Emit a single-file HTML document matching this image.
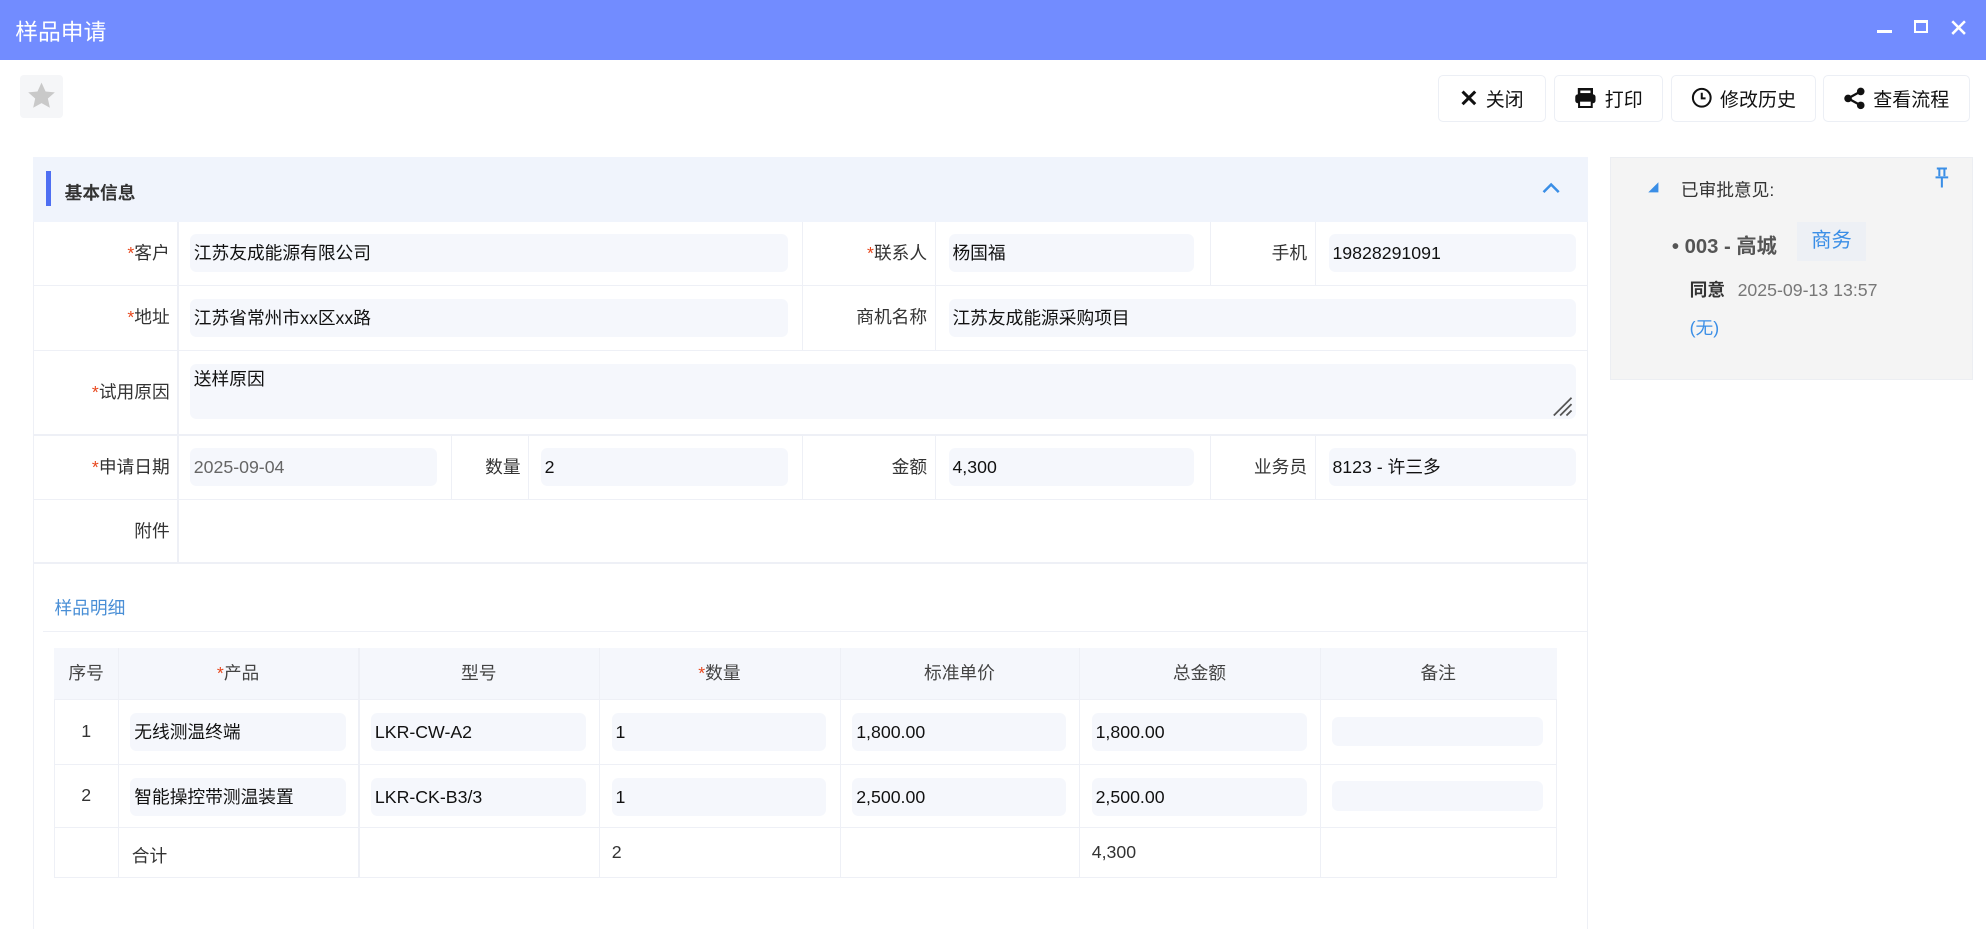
<!DOCTYPE html>
<html><head><meta charset="utf-8"><style>
html,body{margin:0;padding:0;overflow:hidden;background:#fff}
body{width:1986px;height:929px}
#r{zoom:1.26658;width:1568px;height:733px;position:relative;font-family:"Liberation Sans","Noto Sans CJK SC",sans-serif;font-size:14px;color:#222}
.a{position:absolute}
.tb{left:0;top:0;width:1568px;height:47px;background:#728cff;color:#fff}
.btn{top:59px;height:37px;border:1px solid #eceff5;border-radius:4px;box-sizing:border-box;display:flex;align-items:center;justify-content:center;gap:6px;font-size:15px;color:#111}
.lab{text-align:right;color:#333;line-height:20px}
.lab i{color:#e8471d;font-style:normal}
.inp{height:30px;background:#f5f7fc;border-radius:5px;box-sizing:border-box;padding-left:3px;line-height:30px;color:#111}
.hl{height:1px;background:#eef0f6}
.vl{width:1px;background:#eef0f6}
.th{top:512px;height:40px;line-height:40px;text-align:center;color:#444}
</style></head><body><div id="r">
<div class="a tb"><div class="a" style="left:12px;top:11px;font-size:18px">样品申请</div>
<div class="a" style="left:1482px;top:24px;width:12px;height:2px;background:#fff"></div>
<div class="a" style="left:1511px;top:16px;width:11px;height:10px;border:2px solid #fff;border-top-width:3px;box-sizing:border-box"></div>
<svg class="a" style="left:1540px;top:16px" width="12" height="12"><path d="M1 1L11 11M11 1L1 11" stroke="#fff" stroke-width="2"/></svg></div>
<div class="a" style="left:16px;top:59px;width:34px;height:34px;background:#f5f6f8;border-radius:3px"><svg width="34" height="34"><path d="M17 6l3.2 7 7.3.7-5.5 4.9 1.6 7.3L17 22.2l-6.6 3.7 1.6-7.3-5.5-4.9 7.3-.7z" fill="#c9c9c9"/></svg></div>
<div class="a btn" style="left:1135px;width:86px"><svg width="14" height="14"><path d="M2 2L12 12M12 2L2 12" stroke="#111" stroke-width="2.4"/></svg>关闭</div>
<div class="a btn" style="left:1227px;width:86px"><svg width="18" height="16"><rect x="4" y="1" width="10" height="4" fill="none" stroke="#111" stroke-width="2"/><rect x="1" y="5" width="16" height="7" rx="2" fill="#111"/><rect x="4" y="10" width="10" height="5" fill="#fff" stroke="#111" stroke-width="1.6"/></svg>打印</div>
<div class="a btn" style="left:1319px;width:115px"><svg width="17" height="17"><circle cx="8.5" cy="8.5" r="7" fill="none" stroke="#111" stroke-width="1.6"/><path d="M8.5 4.5v4.5h3" fill="none" stroke="#111" stroke-width="1.6"/></svg>修改历史</div>
<div class="a btn" style="left:1439px;width:116px"><svg width="18" height="18"><circle cx="4" cy="9" r="3" fill="#111"/><circle cx="14" cy="3.5" r="3" fill="#111"/><circle cx="14" cy="14.5" r="3" fill="#111"/><path d="M4 9L14 3.5M4 9L14 14.5" stroke="#111" stroke-width="1.8"/></svg>查看流程</div>

<div class="a" style="left:26px;top:124px;width:1228px;height:620px;border-left:1px solid #eef0f6;border-right:1px solid #eef0f6;box-sizing:border-box"></div>
<div class="a" style="left:26px;top:124px;width:1228px;height:51px;background:#f0f4fc"></div>
<div class="a" style="left:36px;top:135px;width:4px;height:28px;background:#4e6ef2"></div>
<div class="a" style="left:51px;top:141px;font-weight:bold;color:#333">基本信息</div>
<svg class="a" style="left:1217px;top:144px" width="16" height="10"><path d="M2 8L8 2L14 8" fill="none" stroke="#3a8ee6" stroke-width="2"/></svg>

<div class="a hl" style="left:26px;top:225px;width:1228px"></div>
<div class="a hl" style="left:26px;top:276px;width:1228px"></div>
<div class="a hl" style="left:26px;top:343px;width:1228px"></div>
<div class="a hl" style="left:26px;top:394px;width:1228px"></div>
<div class="a hl" style="left:26px;top:444px;width:1228px"></div>
<div class="a vl" style="left:140px;top:175px;height:269px"></div>
<div class="a vl" style="left:633px;top:175px;height:101px"></div>
<div class="a vl" style="left:738px;top:175px;height:101px"></div>
<div class="a vl" style="left:955px;top:175px;height:50px"></div>
<div class="a vl" style="left:1038px;top:175px;height:50px"></div>
<div class="a vl" style="left:356px;top:343px;height:51px"></div>
<div class="a vl" style="left:417px;top:343px;height:51px"></div>
<div class="a vl" style="left:633px;top:343px;height:51px"></div>
<div class="a vl" style="left:738px;top:343px;height:51px"></div>
<div class="a vl" style="left:955px;top:343px;height:51px"></div>
<div class="a vl" style="left:1038px;top:343px;height:51px"></div>

<div class="a lab" style="left:26px;width:108px;top:190px"><i>*</i>客户</div>
<div class="a inp" style="left:150px;top:185px;width:472px">江苏友成能源有限公司</div>
<div class="a lab" style="left:633px;width:99px;top:190px"><i>*</i>联系人</div>
<div class="a inp" style="left:749px;top:185px;width:194px">杨国福</div>
<div class="a lab" style="left:955px;width:77px;top:190px">手机</div>
<div class="a inp" style="left:1049px;top:185px;width:195px">19828291091</div>

<div class="a lab" style="left:26px;width:108px;top:241px"><i>*</i>地址</div>
<div class="a inp" style="left:150px;top:236px;width:472px">江苏省常州市xx区xx路</div>
<div class="a lab" style="left:633px;width:99px;top:241px">商机名称</div>
<div class="a inp" style="left:749px;top:236px;width:495px">江苏友成能源采购项目</div>

<div class="a lab" style="left:26px;width:108px;top:300px"><i>*</i>试用原因</div>
<div class="a inp" style="left:150px;top:287px;width:1094px;height:44px;line-height:24px">送样原因
<svg class="a" style="right:2px;bottom:2px" width="18" height="18"><path d="M17 3L3 17M17 8L8 17M17 13L13 17" stroke="#555" stroke-width="1.4"/></svg></div>

<div class="a lab" style="left:26px;width:108px;top:359px"><i>*</i>申请日期</div>
<div class="a inp" style="left:150px;top:354px;width:195px;color:#666">2025-09-04</div>
<div class="a lab" style="left:356px;width:55px;top:359px">数量</div>
<div class="a inp" style="left:427px;top:354px;width:195px">2</div>
<div class="a lab" style="left:633px;width:99px;top:359px">金额</div>
<div class="a inp" style="left:749px;top:354px;width:194px">4,300</div>
<div class="a lab" style="left:955px;width:77px;top:359px">业务员</div>
<div class="a inp" style="left:1049px;top:354px;width:195px">8123 - 许三多</div>
<div class="a lab" style="left:26px;width:108px;top:410px">附件</div>

<div class="a" style="left:43px;top:469px;color:#4a8fd6">样品明细</div>
<div class="a hl" style="left:34px;top:498px;width:1220px"></div>

<div class="a" style="left:43px;top:512px;width:1186px;height:181px;border:1px solid #eef0f6;box-sizing:border-box"></div>
<div class="a" style="left:43px;top:512px;width:1186px;height:40px;background:#f5f7fc"></div>
<div class="a hl" style="left:43px;top:552px;width:1186px"></div>
<div class="a hl" style="left:43px;top:603px;width:1186px"></div>
<div class="a hl" style="left:43px;top:653px;width:1186px"></div>
<div class="a vl" style="left:93px;top:512px;height:181px"></div>
<div class="a vl" style="left:283px;top:512px;height:181px"></div>
<div class="a vl" style="left:473px;top:512px;height:181px"></div>
<div class="a vl" style="left:663px;top:512px;height:181px"></div>
<div class="a vl" style="left:852px;top:512px;height:181px"></div>
<div class="a vl" style="left:1042px;top:512px;height:181px"></div>
<div class="a th" style="left:43px;width:50px">序号</div>
<div class="a th" style="left:93px;width:190px"><span style="color:#e8471d">*</span>产品</div>
<div class="a th" style="left:283px;width:190px">型号</div>
<div class="a th" style="left:473px;width:190px"><span style="color:#e8471d">*</span>数量</div>
<div class="a th" style="left:663px;width:189px">标准单价</div>
<div class="a th" style="left:852px;width:190px">总金额</div>
<div class="a th" style="left:1042px;width:187px">备注</div>

<div class="a" style="left:43px;width:50px;text-align:center;top:569px;color:#333">1</div>
<div class="a inp" style="left:103px;top:563px;width:170px">无线测温终端</div>
<div class="a inp" style="left:293px;top:563px;width:170px">LKR-CW-A2</div>
<div class="a inp" style="left:483px;top:563px;width:169px">1</div>
<div class="a inp" style="left:673px;top:563px;width:169px">1,800.00</div>
<div class="a inp" style="left:862px;top:563px;width:170px">1,800.00</div>
<div class="a inp" style="left:1052px;top:566px;width:166px;height:23px"></div>

<div class="a" style="left:43px;width:50px;text-align:center;top:620px;color:#333">2</div>
<div class="a inp" style="left:103px;top:614px;width:170px">智能操控带测温装置</div>
<div class="a inp" style="left:293px;top:614px;width:170px">LKR-CK-B3/3</div>
<div class="a inp" style="left:483px;top:614px;width:169px">1</div>
<div class="a inp" style="left:673px;top:614px;width:169px">2,500.00</div>
<div class="a inp" style="left:862px;top:614px;width:170px">2,500.00</div>
<div class="a inp" style="left:1052px;top:617px;width:166px;height:23px"></div>

<div class="a" style="left:104px;top:665px;color:#333">合计</div>
<div class="a" style="left:483px;top:665px;color:#333">2</div>
<div class="a" style="left:862px;top:665px;color:#333">4,300</div>

<div class="a" style="left:1271px;top:124px;width:287px;height:176px;background:#f4f4f4;border:1px solid #eceef2;box-sizing:border-box"></div>
<svg class="a" style="left:1300px;top:143px" width="10" height="10"><path d="M9 1V9H1z" fill="#3a8ee6"/></svg>
<div class="a" style="left:1327px;top:139px;color:#333">已审批意见:</div>
<svg class="a" style="left:1526px;top:131px" width="14" height="18"><path d="M3 2h8M5 2v6M9 2v6M2 9h10M7 9v8" fill="none" stroke="#3a8ee6" stroke-width="1.6"/></svg>
<div class="a" style="left:1320px;top:181px;font-size:16px;font-weight:bold;color:#555">•&nbsp;003 - 高城</div>
<div class="a" style="left:1419px;top:175px;width:54px;height:31px;background:#edf0f5;color:#3a8ee6;font-size:16px;line-height:31px;text-align:center">商务</div>
<div class="a" style="left:1334px;top:218px;font-weight:bold;color:#333">同意 <span style="font-weight:normal;color:#777;margin-left:6px">2025-09-13 13:57</span></div>
<div class="a" style="left:1334px;top:248px;color:#3a8ee6">(无)</div>
</div></body></html>
